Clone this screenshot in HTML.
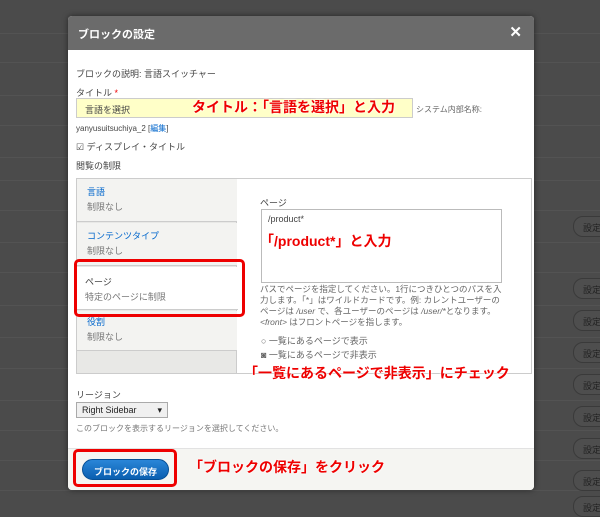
<!DOCTYPE html>
<html><head><meta charset="utf-8"><style>
*{box-sizing:border-box;margin:0;padding:0}
body{width:600px;height:503px;background:#4b4b4b;position:relative;overflow:hidden;font-family:"Liberation Sans","Noto Sans CJK JP",sans-serif;font-size:9px;color:#444}
.line{position:absolute;left:0;width:600px;height:1px;background:#535353}
.sb{position:absolute;left:573px;width:40px;height:21px;border:1px solid #3a3a3a;border-radius:10px;background:#4e4e4e;color:#222;font-size:9px;padding:4px 0 0 9px}
.dlg{position:absolute;left:68px;top:16px;width:466px;height:474px;background:#fff;border-radius:4px;overflow:hidden;box-shadow:0 0 6px rgba(0,0,0,.5)}
.hd{height:34px;background:#6b6b6b;color:#fff;font-weight:bold;font-size:11px;padding:10px 0 0 10px}
.x{position:absolute;right:12px;top:7px;color:#fff;font-size:15px;font-weight:bold}
.a{position:absolute}
.red{color:#e00;font-weight:bold;text-shadow:0 0 2px #fff,0 0 2px #fff}
.box{position:absolute;border:3px solid #e00;border-radius:5px}
</style></head><body>
<div class="line" style="top:33px"></div><div class="line" style="top:62px"></div><div class="line" style="top:95px"></div><div class="line" style="top:125px"></div><div class="line" style="top:157px"></div><div class="line" style="top:180px"></div><div class="line" style="top:210px"></div><div class="line" style="top:242px"></div><div class="line" style="top:272px"></div><div class="line" style="top:305px"></div><div class="line" style="top:337px"></div><div class="line" style="top:368px"></div><div class="line" style="top:400px"></div><div class="line" style="top:430px"></div><div class="line" style="top:460px"></div><div class="line" style="top:490px"></div>
<div class="sb" style="top:216px">設定</div>
<div class="sb" style="top:278px">設定</div>
<div class="sb" style="top:310px">設定</div>
<div class="sb" style="top:342px">設定</div>
<div class="sb" style="top:374px">設定</div>
<div class="sb" style="top:406px">設定</div>
<div class="sb" style="top:438px">設定</div>
<div class="sb" style="top:470px">設定</div>
<div class="sb" style="top:496px">設定</div>

<div class="dlg">
<div class="hd">ブロックの設定</div><div class="x">✕</div>
<div class="a" style="left:8px;top:51px">ブロックの説明: 言語スイッチャー</div>
<div class="a" style="left:8px;top:70px">タイトル <span style="color:#e00">*</span></div>
<div class="a" style="left:8px;top:82px;width:337px;height:20px;background:#ffffc8;border:1px solid #ccc;padding:4px 0 0 8px">言語を選択</div>
<div class="a red" style="left:124px;top:81px;font-size:14px">タイトル：「言語を選択」と入力</div>
<div class="a" style="left:348px;top:88px;font-size:8px;color:#666">システム内部名称:</div>
<div class="a" style="left:8px;top:107px;font-size:8px">yanyusuitsuchiya_2 [<span style="color:#06c">編集</span>]</div>
<div class="a" style="left:8px;top:124px">☑ ディスプレイ・タイトル</div>
<div class="a" style="left:8px;top:143px">閲覧の制限</div>
<div class="a" style="left:8px;top:162px;width:456px;height:196px;border:1px solid #ccc;background:#fff"></div>
<div class="a" style="left:9px;top:163px;width:160px;height:194px;background:#e8e8e6;border-right:1px solid #ccc"></div>
<div class="a" style="left:9px;top:163px;width:160px;height:43px;background:#f3f3f1;border-bottom:1px solid #ccc;padding:6px 0 0 10px"><span style="color:#06c">言語</span><br><span style="color:#777;line-height:18px">制限なし</span></div>
<div class="a" style="left:9px;top:207px;width:160px;height:43px;background:#f3f3f1;border-bottom:1px solid #ccc;padding:6px 0 0 10px"><span style="color:#06c">コンテンツタイプ</span><br><span style="color:#777;line-height:18px">制限なし</span></div>
<div class="a" style="left:9px;top:251px;width:161px;height:43px;background:#fff;border-bottom:1px solid #ccc;padding:8px 0 0 8px">ページ<br><span style="color:#777;line-height:18px">特定のページに制限</span></div>
<div class="a" style="left:9px;top:295px;width:160px;height:40px;background:#f3f3f1;border-bottom:1px solid #ccc;padding:4px 0 0 10px"><span style="color:#06c">役割</span><br><span style="color:#777;line-height:18px">制限なし</span></div>
<div class="box" style="left:6px;top:243px;width:171px;height:58px"></div>
<div class="a" style="left:192px;top:180px">ページ</div>
<div class="a" style="left:193px;top:193px;width:241px;height:74px;border:1px solid #bbb;padding:4px 6px">/product*</div>
<div class="a red" style="left:192px;top:215px;font-size:14px">「/product*」と入力</div>
<div class="a" style="left:192px;top:268px;width:245px;font-size:8.5px;line-height:11px;color:#666">パスでページを指定してください。1行につきひとつのパスを入力します。「*」はワイルドカードです。例: カレントユーザーのページは <i>/user</i> で、各ユーザーのページは <i>/user/*</i>となります。<i>&lt;front&gt;</i> はフロントページを指します。</div>
<div class="a" style="left:193px;top:318px;color:#666">○ 一覧にあるページで表示</div>
<div class="a" style="left:193px;top:332px;color:#666">◙ 一覧にあるページで非表示</div>
<div class="a red" style="left:176px;top:347px;font-size:14px">「一覧にあるページで非表示」にチェック</div>
<div class="a" style="left:8px;top:372px">リージョン</div>
<div class="a" style="left:8px;top:386px;width:92px;height:16px;border:1px solid #aaa;background:#f0f0f0;padding:2px 0 0 5px;color:#222">Right Sidebar <span style="float:right;margin-right:5px">▾</span></div>
<div class="a" style="left:8px;top:407px;font-size:8px;color:#777">このブロックを表示するリージョンを選択してください。</div>
<div class="a" style="left:0;top:432px;width:466px;height:42px;background:#f5f5f2;border-top:1px solid #e2e2e2"></div>
<div class="a" style="left:14px;top:443px;width:87px;height:21px;border-radius:11px;background:linear-gradient(#2a86d8,#0a5fb0);border:1px solid #064f95;color:#fff;font-weight:bold;font-size:9px;text-align:center;padding-top:5px">ブロックの保存</div>
<div class="box" style="left:5px;top:433px;width:104px;height:38px"></div>
<div class="a red" style="left:121px;top:441px;font-size:14px">「ブロックの保存」をクリック</div>
</div>
</body></html>
